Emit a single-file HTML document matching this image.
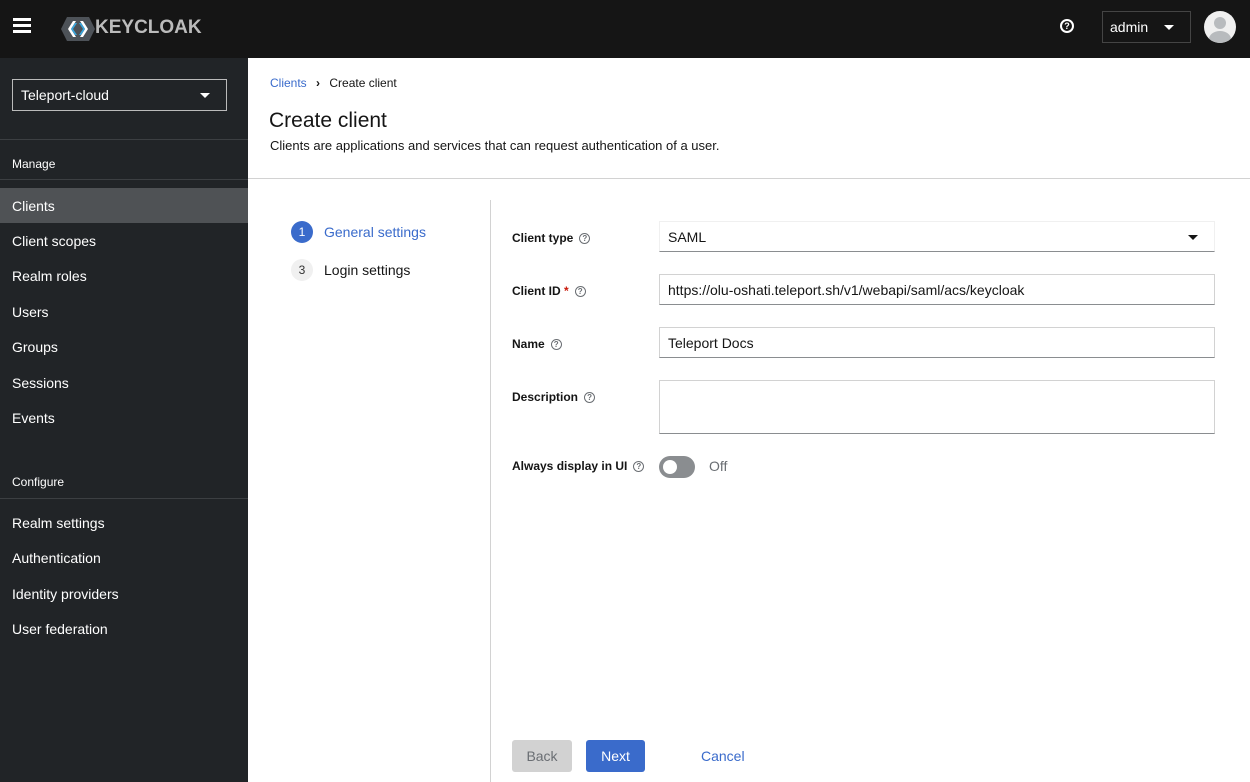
<!DOCTYPE html>
<html><head><meta charset="utf-8"><style>
*{margin:0;padding:0;box-sizing:border-box}
body{width:1250px;height:782px;overflow:hidden;font-family:"Liberation Sans",sans-serif;background:#fff;position:relative;color:#151515}
.a{position:absolute}
.hdr{left:0;top:0;width:1250px;height:58px;background:#151515}
.side{left:0;top:58px;width:248px;height:724px;background:#212427}
.nav{left:12px;color:#fff;font-size:14px}
.help{display:inline-block;width:11px;height:11px;border:1.2px solid #6a6e73;border-radius:50%;font-size:8px;line-height:9px;text-align:center;color:#6a6e73;font-weight:bold;vertical-align:middle;margin-left:6px}
.lbl{left:512px;font-size:12px;font-weight:bold}
.inp{left:659px;width:556px;height:31px;border:1px solid #d2d2d2;border-bottom-color:#8a8d90;font-size:14px;padding:7px 8px}
</style></head><body>
<div class="a hdr"></div>
<div class="a" style="left:13px;top:18px;width:18px;height:3px;background:#fff;box-shadow:0 6px 0 #fff,0 12px 0 #fff"></div>
<svg class="a" style="left:60px;top:16px" width="36" height="26" viewBox="0 0 36 26"><polygon points="7,1 29,1 35,13 29,25 7,25 1,13" fill="#4d5258"/><polygon points="8,13 13,5 16,5 11,13 16,21 13,21" fill="#fff"/><polygon points="11,13 15,7 17,7 13,13 17,19 15,19" fill="#39a5dc"/><polygon points="28,13 23,5 20,5 25,13 20,21 23,21" fill="#fff"/><polygon points="25,13 21,7 19,7 23,13 19,19 21,19" fill="#39a5dc"/></svg>
<div class="a" style="left:95px;top:17px;color:#bbb;font-weight:bold;font-size:19px">KEYCLOAK</div>
<div class="a" style="left:1060px;top:19px;width:14px;height:14px;border:2px solid #fff;border-radius:50%;color:#fff;font-size:9px;line-height:10px;text-align:center;font-weight:bold">?</div>
<div class="a" style="left:1102px;top:11px;width:89px;height:32px;border:1px solid #444;color:#fff;font-size:14px;padding:7px 7px">admin<span style="position:absolute;right:16px;top:13px;border:5px solid transparent;border-top:5px solid #fff;border-bottom:0"></span></div>
<div class="a" style="left:1204px;top:11px;width:32px;height:32px;border-radius:50%;background:#f0f0f0;overflow:hidden"><div class="a" style="left:10px;top:6px;width:12px;height:12px;border-radius:50%;background:#b8bbbe"></div><div class="a" style="left:5px;top:20px;width:22px;height:16px;border-radius:50%;background:#b8bbbe"></div></div>
<div class="a side"></div>
<div class="a" style="left:12px;top:79px;width:215px;height:32px;border:1px solid #bbb;color:#fff;font-size:14px;padding:7px 8px">Teleport-cloud<span style="position:absolute;right:16px;top:13px;border:5px solid transparent;border-top:5px solid #fff;border-bottom:0"></span></div>
<div class="a" style="left:0;top:139px;width:248px;height:1px;background:#3c3f42"></div>
<div class="a nav" style="top:157px;font-size:12px">Manage</div>
<div class="a" style="left:0;top:179px;width:248px;height:1px;background:#3c3f42"></div>
<div class="a" style="left:0;top:188px;width:248px;height:35px;background:#4f5255"></div>
<div class="a nav" style="top:198px">Clients</div>
<div class="a nav" style="top:233px">Client scopes</div>
<div class="a nav" style="top:268px">Realm roles</div>
<div class="a nav" style="top:304px">Users</div>
<div class="a nav" style="top:339px">Groups</div>
<div class="a nav" style="top:375px">Sessions</div>
<div class="a nav" style="top:410px">Events</div>
<div class="a nav" style="top:475px;font-size:12px">Configure</div>
<div class="a" style="left:0;top:498px;width:248px;height:1px;background:#3c3f42"></div>
<div class="a nav" style="top:515px">Realm settings</div>
<div class="a nav" style="top:550px">Authentication</div>
<div class="a nav" style="top:586px">Identity providers</div>
<div class="a nav" style="top:621px">User federation</div>

<div class="a" style="left:270px;top:76px;font-size:12px"><span style="color:#3a6bcb">Clients</span> <b style="margin:0 6px">›</b> Create client</div>
<div class="a" style="left:269px;top:109px;font-size:21px">Create client</div>
<div class="a" style="left:270px;top:138px;font-size:13px">Clients are applications and services that can request authentication of a user.</div>
<div class="a" style="left:248px;top:178px;width:1002px;height:1px;background:#d2d2d2"></div>
<div class="a" style="left:490px;top:200px;width:1px;height:582px;background:#d2d2d2"></div>

<div class="a" style="left:291px;top:221px;width:22px;height:22px;border-radius:50%;background:#3a6bcb;color:#fff;font-size:12px;text-align:center;line-height:22px">1</div>
<div class="a" style="left:324px;top:224px;font-size:14px;color:#3a6bcb">General settings</div>
<div class="a" style="left:291px;top:259px;width:22px;height:22px;border-radius:50%;background:#f0f0f0;color:#333;font-size:12px;text-align:center;line-height:22px">3</div>
<div class="a" style="left:324px;top:262px;font-size:14px">Login settings</div>

<div class="a lbl" style="top:231px">Client type<span class="help">?</span></div>
<div class="a inp" style="top:221px;border-color:#f0f0f0;border-bottom-color:#8a8d90">SAML<span style="position:absolute;right:16px;top:13px;border:5px solid transparent;border-top:5px solid #151515;border-bottom:0"></span></div>
<div class="a lbl" style="top:284px">Client ID <span style="color:#c9190b">*</span><span class="help">?</span></div>
<div class="a inp" style="top:274px">https://olu-oshati.teleport.sh/v1/webapi/saml/acs/keycloak</div>
<div class="a lbl" style="top:337px">Name<span class="help">?</span></div>
<div class="a inp" style="top:327px">Teleport Docs</div>
<div class="a lbl" style="top:390px">Description<span class="help">?</span></div>
<div class="a inp" style="top:380px;height:54px"></div>
<div class="a lbl" style="top:459px">Always display in UI<span class="help">?</span></div>
<div class="a" style="left:659px;top:456px;width:36px;height:22px;border-radius:11px;background:#8a8d90"><div class="a" style="left:4px;top:4px;width:14px;height:14px;border-radius:50%;background:#fff"></div></div>
<div class="a" style="left:709px;top:458px;font-size:14px;color:#6a6e73">Off</div>

<div class="a" style="left:512px;top:740px;width:60px;height:32px;border-radius:3px;background:#d2d2d2;color:#6a6e73;font-size:14px;text-align:center;line-height:32px">Back</div>
<div class="a" style="left:586px;top:740px;width:59px;height:32px;border-radius:3px;background:#3a6bcb;color:#fff;font-size:14px;text-align:center;line-height:32px">Next</div>
<div class="a" style="left:701px;top:748px;font-size:14px;color:#3a6bcb">Cancel</div>
</body></html>
